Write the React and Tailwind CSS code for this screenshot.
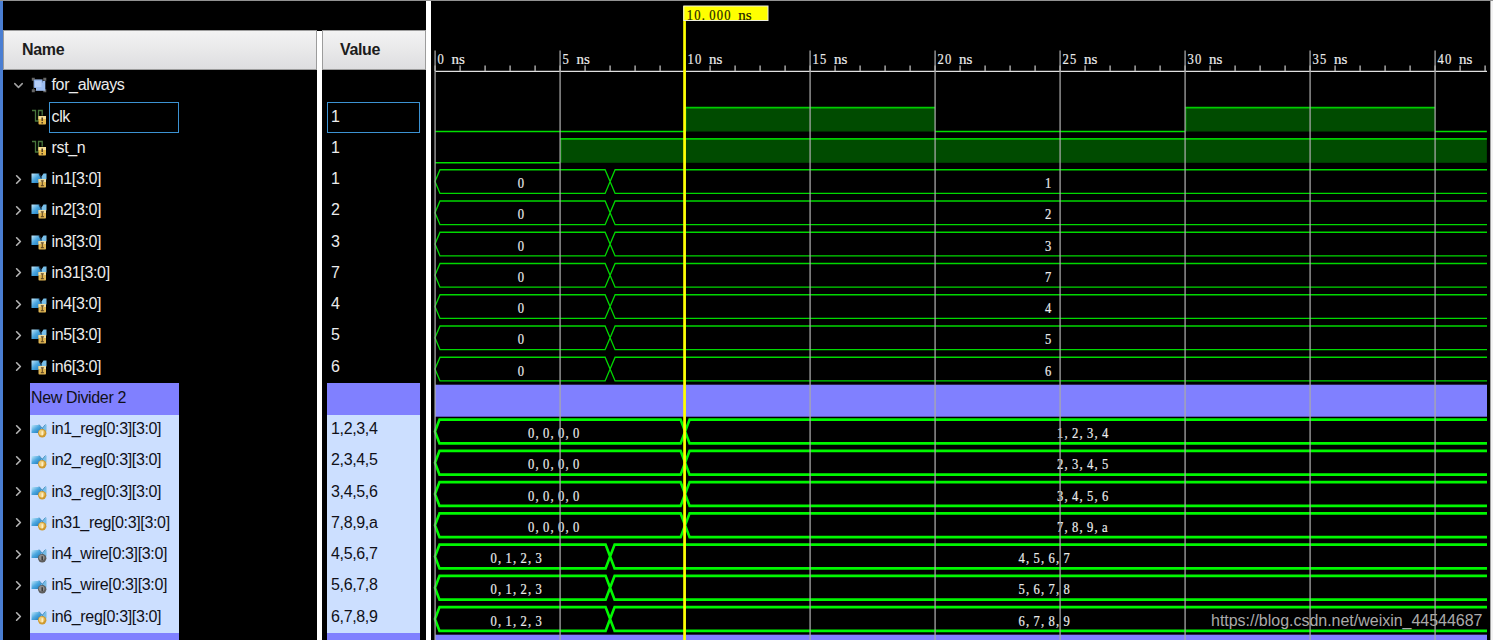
import { ChevronDown, ChevronRight } from "lucide-react";

const signals = [
  { name: "for_always", value: "", icon: "group", open: true },
  { name: "clk", value: "1", icon: "bit", selected: true },
  { name: "rst_n", value: "1", icon: "bit" },
  { name: "in1[3:0]", value: "1", icon: "bus" },
  { name: "in2[3:0]", value: "2", icon: "bus" },
  { name: "in3[3:0]", value: "3", icon: "bus" },
  { name: "in31[3:0]", value: "7", icon: "bus" },
  { name: "in4[3:0]", value: "4", icon: "bus" },
  { name: "in5[3:0]", value: "5", icon: "bus" },
  { name: "in6[3:0]", value: "6", icon: "bus" },
  { name: "New Divider 2", divider: true },
  { name: "in1_reg[0:3][3:0]", value: "1,2,3,4", icon: "reg", from: "0,0,0,0", at: 10 },
  { name: "in2_reg[0:3][3:0]", value: "2,3,4,5", icon: "reg", from: "0,0,0,0", at: 10 },
  { name: "in3_reg[0:3][3:0]", value: "3,4,5,6", icon: "reg", from: "0,0,0,0", at: 10 },
  { name: "in31_reg[0:3][3:0]", value: "7,8,9,a", icon: "reg", from: "0,0,0,0", at: 10 },
  { name: "in4_wire[0:3][3:0]", value: "4,5,6,7", icon: "wire", from: "0,1,2,3", at: 7 },
  { name: "in5_wire[0:3][3:0]", value: "5,6,7,8", icon: "wire", from: "0,1,2,3", at: 7 },
  { name: "in6_reg[0:3][3:0]", value: "6,7,8,9", icon: "reg", from: "0,1,2,3", at: 7 },
  { name: "", divider: true },
];

// wave chart geometry, the svg starts right after the white splitter
const LEFT = 4;
const RIGHT = 1056;
const NS = 25;
const ROW = 31.25;
const TOP = 72;
const CHAR = 7.5;
const SQUEEZE = 0.84;

const timeX = (t) => LEFT + 0.1 + t * NS;
const rowY = (i) => TOP + i * ROW;

const SignalIcon = ({ type }) => {
  if (type === "group") {
    return (
      <svg width="16" height="16" viewBox="0 0 16 16" className="mb-[2px] shrink-0">
        <path d="M3.5 2.5h9M3.5 13.5h9M2.5 3.5v9M13.5 3.5v9" stroke="#2e2e30" strokeWidth="1" />
        <path d="M0.8 0.8h3v3h-3zM12.3 0.8h3v3h-3zM0.8 12.2h3v3h-3zM12.3 12.2h3v3h-3z" fill="#666" />
        <rect x="2.8" y="2.5" width="8.7" height="8.5" rx="1" fill="#8caee6" />
        <path d="M5 5.5h6.5v-1.5h2.8v9.8h-9.3z" fill="#9dbdf1" />
        <rect x="4" y="3.7" width="6.5" height="6.3" fill="#b4cef8" />
      </svg>
    );
  }
  if (type === "bit") {
    return (
      <svg width="16" height="16" viewBox="0 0 16 16" className="mb-[2px] shrink-0">
        <path d="M1 1.5h3.5v10.5h3M7.5 12V1.5h3.7v5" fill="none" stroke="#47753c" strokeWidth="1.3" />
        <rect x="7.5" y="7" width="7.5" height="8.5" rx="0.8" fill="#e5b74a" />
        <rect x="7.5" y="7" width="7.5" height="3" fill="#f4dc94" />
        <path d="M11.2 8.5v3.6M11.2 13v1.5" stroke="#4a3820" strokeWidth="1.5" />
      </svg>
    );
  }
  const array = type !== "bus";
  return (
    <svg width="16" height="16" viewBox="0 0 16 16" className="mb-[1px] shrink-0">
      <defs>
        <linearGradient id={"blue-" + type} x1="0" y1="0" x2="1" y2="1">
          <stop offset="0" stopColor="#c4e8fa" />
          <stop offset="0.45" stopColor="#4da8e0" />
          <stop offset="1" stopColor="#1672b4" />
        </linearGradient>
      </defs>
      {array ? (
        <>
          <path d="M0.5 3h8l2 3-3 5h-7z" fill={"url(#blue-" + type + ")"} />
          <path d="M15.5 2.5v7h-4l-1-3z" fill="#76bce6" />
          <path d="M8 2.5l6 7M14.5 2.5l-6 7" stroke="#4790c0" strokeWidth="1" />
          <circle cx="11.2" cy="11.2" r="4.2" fill={type === "reg" ? "#cf9a30" : "#5c5c5c"} />
          <circle cx="10.7" cy="10.6" r="2.8" fill={type === "reg" ? "#f0ce78" : "#8f8f8f"} />
          <path d="M11.2 9.2v4" stroke={type === "reg" ? "#fff4d6" : "#2c2c2c"} strokeWidth="1.3" />
        </>
      ) : (
        <>
          <path d="M0.5 1.5h7.5l2.5 4-2 5.5h-8z" fill={"url(#blue-" + type + ")"} />
          <path d="M15.5 1.5v6h-5l-1-1.5 3-4.5z" fill="#79bfe9" />
          <path d="M8 1.5l2.5 5" stroke="#16324a" strokeWidth="1.2" />
          <rect x="7.5" y="7" width="7.5" height="8.5" rx="0.8" fill="#dfb553" />
          <rect x="7.5" y="7" width="7.5" height="3" fill="#f1dda0" />
          <path d="M9.8 8.9h3M11.3 8.7v5M9.8 13.6h3" stroke="#664c24" strokeWidth="1.1" />
        </>
      )}
    </svg>
  );
};

const NameRow = ({ signal }) => {
  const { name, icon, open, divider, selected } = signal;
  const array = icon === "reg" || icon === "wire";

  if (divider) {
    return (
      <div className="h-[31.25px] shrink-0 pl-[27px]">
        <div className="flex h-full w-[149px] items-center bg-[#8080ff] pb-[2px] pl-px text-[#101018]">{name}</div>
      </div>
    );
  }

  return (
    <div className="flex h-[31.25px] shrink-0 items-center">
      <div className="flex w-[27px] shrink-0 pb-[2px] pl-2">
        {open && <ChevronDown size={15} strokeWidth={2.4} className="text-[#a0a0a0]" />}
        {!open && icon !== "bit" && <ChevronRight size={15} strokeWidth={2.6} className="text-[#b4b4b4]" />}
      </div>
      <div
        className={
          "flex h-full w-[149px] items-center pl-px " +
          (array ? "bg-[#ccdfff] text-[#101018]" : "text-[#ececec]")
        }
      >
        <SignalIcon type={icon} />
        <div
          className={
            "ml-[2px] flex h-full grow items-center border pb-[2px] pl-[1.5px] " +
            (selected ? "border-[#3c92d2]" : "border-transparent")
          }
        >
          {name}
        </div>
      </div>
    </div>
  );
};

const ValueRow = ({ signal }) => {
  const { value, icon, divider, selected } = signal;
  let color = "border-transparent text-[#ececec]";
  if (divider) color = "border-[#8080ff] bg-[#8080ff]";
  else if (icon === "reg" || icon === "wire") color = "border-[#ccdfff] bg-[#ccdfff] text-[#101018]";
  else if (selected) color = "border-[#3c92d2] text-[#ececec]";

  return (
    <div className={"ml-[5px] flex h-[31.25px] w-[93.4px] shrink-0 items-center border pb-[2px] pl-[3px] " + color}>
      {value}
    </div>
  );
};

// every character sits in its own cell of fixed width, the digits are narrower than the unit
const CellText = ({ x, y, text, unit, fill = "#ececec" }) => (
  <>
    <text
      transform={`translate(${x + 0.5} ${y}) scale(${SQUEEZE} 1)`}
      x={text.split("").map((c, i) => (i * CHAR) / SQUEEZE).join(" ")}
      fill={fill}
      stroke={fill}
      strokeWidth="0.2"
    >
      {text}
    </text>
    {unit && (
      <text
        x={unit.split("").map((c, i) => x + (text.length + 1 + i) * CHAR - 0.5).join(" ")}
        y={y}
        fill={fill}
        stroke={fill}
        strokeWidth="0.2"
      >
        {unit}
      </text>
    )}
  </>
);

const Bus = ({ index, signal }) => {
  const thick = !!signal.from;
  const change = timeX(signal.at || 7);
  const y1 = rowY(index) + (thick ? 3.9 : 4);
  const y2 = y1 + 23.7;
  const mid = (y1 + y2) / 2;
  const d = thick ? 4.5 : 5;
  const from = signal.from || "0";
  const fromX = thick ? (signal.at === 10 ? 96.5 : 59) : 86.3;
  const toX = thick ? (signal.at === 10 ? 625.5 : 587) : 613.5;

  return (
    <g>
      <path
        d={
          `M${RIGHT} ${y1}H${change + d}L${change - d} ${y2}H${LEFT + d}L${LEFT} ${mid}L${LEFT + d} ${y1}` +
          `H${change - d}L${change + d} ${y2}H${RIGHT}`
        }
        fill="none"
        stroke={thick ? "#00f800" : "#00d800"}
        strokeWidth={thick ? 2.6 : 1.3}
      />
      <CellText x={fromX} y={rowY(index) + 22.3} text={from} />
      <CellText x={toX} y={rowY(index) + 22.3} text={signal.value} />
    </g>
  );
};

const High = ({ from, to, index }) => (
  <g>
    <rect x={timeX(from)} y={rowY(index) + 4} width={timeX(to) - timeX(from)} height="24.3" fill="#004b00" />
    <path
      d={`M${timeX(from) + 0.8} ${rowY(index) + 28}V${rowY(index) + 4.4}`}
      fill="none"
      stroke="#008800"
      strokeWidth="1.4"
    />
    <path d={`M${timeX(from)} ${rowY(index) + 4.4}H${timeX(to)}`} stroke="#00cc00" strokeWidth="1.6" />
  </g>
);

const Low = ({ from, to, index }) => (
  <path d={`M${timeX(from)} ${rowY(index) + 28.2}H${timeX(to)}`} stroke="#00e000" strokeWidth="1.4" />
);

const WaveChart = () => {
  const ticks = Array.from({ length: 43 }, (_, i) => i);
  const majors = ticks.filter((t) => t % 5 === 0);

  return (
    <svg
      width="1059"
      height="640"
      viewBox="0 0 1059 640"
      className="block shrink-0 bg-black font-['Liberation_Serif',serif] text-[15px] tracking-normal"
    >
      <path d={`M${LEFT} 71.4H${RIGHT}`} stroke="#e0e0e0" strokeWidth="1.3" />
      {ticks.map((t) => (
        <path key={t} d={`M${timeX(t)} 65.5V71`} stroke="#b0b0b0" strokeWidth="1.4" />
      ))}
      {majors.map((t) => (
        <CellText key={t} x={timeX(t) + 2} y={63.5} text={String(t)} unit="ns" />
      ))}

      <Low from={0} to={10} index={1} />
      <High from={10} to={20} index={1} />
      <Low from={20} to={30} index={1} />
      <High from={30} to={40} index={1} />
      <Low from={40} to={42.07} index={1} />
      <Low from={0} to={5} index={2} />
      <High from={5} to={42.07} index={2} />

      {signals.map((signal, i) => {
        if (i < 3) return null;
        if (signal.divider) {
          return <rect key={i} x={LEFT} y={rowY(i) + 0.2} width={RIGHT - LEFT} height="32" fill="#8080ff" />;
        }
        return <Bus key={i} index={i} signal={signal} />;
      })}

      {majors.map((t) => (
        <path key={t} d={`M${timeX(t)} 50.5V640`} stroke="#a8a8a8" strokeOpacity="0.85" strokeWidth="1.5" />
      ))}

      {/* time cursor */}
      <rect x="252.2" y="6" width="2.7" height="634" fill="#ffff00" />
      <rect x="252.8" y="6" width="84.2" height="14.5" fill="#ffff00" stroke="#eeeedd" strokeWidth="1" />
      <CellText x={255.3} y={19.5} text="10.000" unit="ns" fill="#222200" />

      <text
        x="780"
        y="626.3"
        textLength="271.5"
        fill="#aaaaaa"
        className="font-['Liberation_Sans',sans-serif] text-[16px]"
      >
        https://blog.csdn.net/weixin_44544687
      </text>
    </svg>
  );
};

const Header = ({ children, className }) => (
  <div
    className={
      "mt-[30px] flex h-10 shrink-0 items-center border border-[#9c9c9c] bg-linear-to-b from-[#f3f3f3] to-[#dedee0] font-bold text-[#1c1c1c] " +
      className
    }
  >
    {children}
  </div>
);

export default function App() {
  return (
    <div className="relative flex h-[640px] w-[1493px] overflow-hidden bg-black font-['Liberation_Sans',Arial,sans-serif] text-[16px] leading-none tracking-[-0.35px]">
      <div className="w-[3px] shrink-0 bg-[#4a7ed2]"></div>
      <div className="flex w-[314px] shrink-0 flex-col">
        <Header className="mb-[0.75px] pl-[18px]">Name</Header>
        {signals.map((signal, i) => (
          <NameRow key={i} signal={signal} />
        ))}
      </div>
      <div className="mt-[31px] w-[5px] shrink-0 bg-white"></div>
      <div className="flex w-[104px] shrink-0 flex-col">
        <Header className="mb-[0.75px] pl-[17px]">Value</Header>
        {signals.map((signal, i) => (
          <ValueRow key={i} signal={signal} />
        ))}
      </div>
      <div className="w-[5px] shrink-0 bg-white"></div>
      <WaveChart />
      <div className="grow border-l border-[#a0a0a0] bg-[#f4f4f4]"></div>
      <div className="absolute inset-x-0 top-0 h-px bg-[#929292]"></div>
    </div>
  );
}
